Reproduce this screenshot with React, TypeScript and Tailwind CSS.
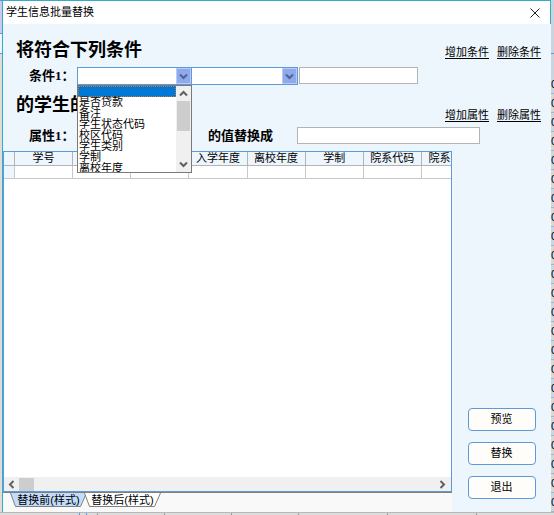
import { useState } from "react";

const columns = [
  "学号",
  "姓名",
  "班级代码",
  "入学年度",
  "离校年度",
  "学制",
  "院系代码",
  "院系名称",
];

const fields = [
  "是否贷款",
  "备注",
  "学生状态代码",
  "校区代码",
  "学生类别",
  "学制",
  "离校年度",
];

const operators = ["等于", "不等于", "包含"];

// rows of the list window that shows behind the dialog
const rows = Array.from({ length: 23 }, (_, i) => i);

type ChevronProps = { className: string; d: string };

function Chevron({ className, d }: ChevronProps) {
  return (
    <svg viewBox="0 0 9 9" className={className} fill="none" strokeWidth="2">
      <path d={d} stroke="currentColor" />
    </svg>
  );
}

const UP = "M1 6.5 4.5 3 8 6.5";
const DOWN = "M1 2.5 4.5 6 8 2.5";
const LEFT = "M6.5 1 3 4.5 6.5 8";
const RIGHT = "M2.5 1 6 4.5 2.5 8";

type ComboProps = {
  id: string;
  label?: string;
  options: string[];
  className: string;
};

function Combo({ id, label, options, className }: ComboProps) {
  return (
    <div className={`relative h-[18px] ${className}`}>
      <select
        id={id}
        aria-label={label}
        className="block w-full h-full appearance-none border border-[#5b9bdc] bg-white px-1 text-[11px] outline-none"
      >
        <option value=""></option>
        {options.map((o) => (
          <option key={o}>{o}</option>
        ))}
      </select>
      <span className="pointer-events-none absolute inset-y-px right-px flex w-[15px] items-center justify-center border border-[#b9cdf3] bg-[#8fa8ee] text-[#4f6590]">
        <Chevron className="w-[9px] h-[9px]" d={DOWN} />
      </span>
    </div>
  );
}

function FieldList() {
  return (
    <div className="absolute left-0 top-[18px] z-10 flex h-[88px] w-[115px] border border-[#7a7a7a] bg-white">
      <ul role="listbox" aria-label="字段" className="flex-1 overflow-hidden">
        <li
          role="option"
          aria-selected="true"
          className="h-[11px] border border-dotted border-[#c8782c] bg-[#0078d7]"
        ></li>
        {fields.map((f) => (
          <li
            key={f}
            role="option"
            aria-selected="false"
            className="h-[11px] pl-px text-[11px] leading-[11px]"
          >
            {f}
          </li>
        ))}
      </ul>
      <div className="flex w-[15px] flex-col items-center bg-[#f0f0f0] text-[#606060]">
        <span className="flex h-[15px] items-center">
          <Chevron className="w-[9px] h-[9px]" d={UP} />
        </span>
        <span className="h-[30px] w-[13px] bg-[#cdcdcd]"></span>
        <span className="mt-auto flex h-[15px] items-center">
          <Chevron className="w-[9px] h-[9px]" d={DOWN} />
        </span>
      </div>
    </div>
  );
}

function Links({ names }: { names: string[] }) {
  return (
    <div className="flex gap-2 self-end text-[11px] leading-4">
      {names.map((n) => (
        <a key={n} href="#" className="underline underline-offset-2">
          {n}
        </a>
      ))}
    </div>
  );
}

function Grid() {
  return (
    <div className="overflow-hidden">
      <table className="w-[476px] table-fixed border-separate border-spacing-0 text-[11px] leading-[13px]">
        <thead>
          <tr className="h-[14px] bg-[#edf5fd]">
            <th className="w-[11px] border-r border-b border-[#b4b4b4] p-0"></th>
            {columns.map((c) => (
              <th
                key={c}
                className="border-r border-b border-[#b4b4b4] p-0 font-normal whitespace-nowrap"
              >
                {c}
              </th>
            ))}
          </tr>
        </thead>
        <tbody>
          <tr className="h-[13px]">
            <td className="border-r border-b border-[#c8c8c8] bg-[#edf5fd] p-0"></td>
            {columns.map((c) => (
              <td key={c} className="border-r border-b border-[#c8c8c8] p-0"></td>
            ))}
          </tr>
        </tbody>
      </table>
    </div>
  );
}

type TabProps = { name: string; active: boolean; onClick: () => void };

function Tab({ name, active, onClick }: TabProps) {
  return (
    <button
      role="tab"
      aria-selected={active}
      onClick={onClick}
      className="relative -mr-[3px] h-[14px] w-[77px] text-[11px] leading-[14px]"
    >
      <svg
        viewBox="0 0 77 14"
        className="absolute inset-0 h-full w-full"
        stroke="#808080"
      >
        <path d="M.5 0 5.5 13.5H70.5L76.5 0" fill={active ? "#c2dcfb" : "#fff"} />
      </svg>
      <span className="relative">{name}</span>
    </button>
  );
}

function App() {
  const [tab, setTab] = useState(0);

  return (
    <div className="flex min-h-screen flex-col bg-[#d9d9d9] font-['Liberation_Sans','Noto_Sans_CJK_SC',sans-serif] text-black">
      <div className="flex flex-1">
        <div className="flex w-[2px] flex-col bg-[#e0dcd8]">
          <div className="h-[34px] border-y border-[#5b9bdc] bg-[#c9cbea]"></div>
          <div className="h-5 border-b border-[#5b9bdc] bg-[#edf5fd]"></div>
        </div>
        <div className="flex min-w-0 flex-1 flex-col border-t border-l border-[#35abc8] bg-[#edf5fd]">
          <header className="flex h-[23px] items-center justify-between border-r border-[#35abc8] bg-white pr-[10px] pl-[3px]">
            <h1 className="text-[11px]">学生信息批量替换</h1>
            <button aria-label="关闭">
              <svg viewBox="0 0 10 10" className="h-[10px] w-[10px]" stroke="#222">
                <path d="M.5.5l9 9M9.5.5l-9 9" />
              </svg>
            </button>
          </header>

          <section className="pt-4">
            <div className="flex h-5 items-center justify-between pr-[10px] pl-[13px]">
              <h2 className="font-['Liberation_Serif','Noto_Sans_CJK_SC',serif] text-lg leading-5 font-bold">
                将符合下列条件
              </h2>
              <Links names={["增加条件", "删除条件"]} />
            </div>
            <div className="mt-[7px] flex pl-[26px]">
              <label
                htmlFor="cond-field"
                className="w-12 font-['Liberation_Serif','Noto_Sans_CJK_SC',serif] text-[13px] leading-[18px] font-bold"
              >
                条件1：
              </label>
              <div className="relative">
                <Combo id="cond-field" options={fields} className="w-[115px]" />
                <FieldList />
              </div>
              <Combo
                id="cond-op"
                label="运算符"
                options={operators}
                className="-ml-px w-[107px]"
              />
              <input
                aria-label="条件值"
                className="ml-px h-[17px] w-[119px] border border-[#b4b4b4] bg-white px-1 text-[11px]"
              />
            </div>
          </section>

          <section className="pt-[10px]">
            <div className="flex h-7 items-start justify-between pr-[10px] pl-[13px]">
              <h2 className="font-['Liberation_Serif','Noto_Sans_CJK_SC',serif] text-lg leading-5 font-bold">
                的学生的
              </h2>
              <Links names={["增加属性", "删除属性"]} />
            </div>
            <div className="mt-1 flex pl-[26px] font-['Liberation_Serif','Noto_Sans_CJK_SC',serif] text-[13px] leading-[18px] font-bold">
              <label htmlFor="attr-field" className="w-12">
                属性1：
              </label>
              <Combo id="attr-field" options={fields} className="w-[115px]" />
              <label htmlFor="attr-value" className="ml-4 w-[89px]">
                的值替换成
              </label>
              <input
                id="attr-value"
                className="h-[17px] w-[183px] border border-[#b4b4b4] bg-white px-1 text-[11px] font-normal"
              />
            </div>
          </section>

          <div className="mt-[6px] flex flex-1">
            <div className="flex min-w-0 flex-1 flex-col bg-[#f9f9f9]">
              <div className="flex flex-1 flex-col border border-[#5b9bdc] bg-white">
                <Grid />
                <div className="mt-auto flex h-[14px] items-center bg-[#f0f0f0] text-[#606060]">
                  <Chevron className="mx-[3px] h-[9px] w-[9px]" d={LEFT} />
                  <span className="h-[13px] w-[15px] bg-[#cdcdcd]"></span>
                  <Chevron className="mr-1 ml-auto h-[9px] w-[9px]" d={RIGHT} />
                </div>
              </div>
              <div
                role="tablist"
                className="flex h-5 border-t border-[#808080] pl-[7px]"
              >
                {["替换前(样式)", "替换后(样式)"].map((t, i) => (
                  <Tab
                    key={t}
                    name={t}
                    active={tab === i}
                    onClick={() => setTab(i)}
                  />
                ))}
              </div>
            </div>
            <div className="flex w-[99px] flex-col items-center justify-end gap-[11px] pb-[13px]">
              {["预览", "替换", "退出"].map((b) => (
                <button
                  key={b}
                  className="h-[23px] w-[68px] rounded border border-[#5b9bdc] bg-[#fffdf9] text-[11px]"
                >
                  {b}
                </button>
              ))}
            </div>
          </div>
        </div>
        <div className="flex w-[3px] flex-col overflow-hidden bg-[#c8d4e0]">
          <div className="mb-auto h-[54px] shrink-0 border-b border-[#5b9bdc]"></div>
          {rows.map((r) => (
            <span
              key={r}
              aria-hidden="true"
              className="h-[19px] shrink-0 border-b border-[#aab4be] text-[11px] leading-[18px] odd:bg-[#d8d8d8] even:bg-[#ccd6e0]"
            >
              0
            </span>
          ))}
        </div>
      </div>
      <div className="flex h-[3px] border-t border-[#b8b8b8] bg-[#dcdcdc]">
        <div className="w-20 border-r border-[#5b9bdc]"></div>
        <div className="w-[7px] border-r border-[#5b9bdc]"></div>
        <div className="w-[11px] border-r border-[#9a9a9a]"></div>
        <div className="w-[67px] border-r border-[#9a9a9a]"></div>
        <div className="w-[67px] border-r border-[#9a9a9a]"></div>
        <div className="w-[67px] border-r border-[#9a9a9a]"></div>
        <div className="w-[89px] border-r border-[#9a9a9a]"></div>
        <div className="w-[89px] border-r border-[#9a9a9a]"></div>
      </div>
    </div>
  );
}

export default App;
